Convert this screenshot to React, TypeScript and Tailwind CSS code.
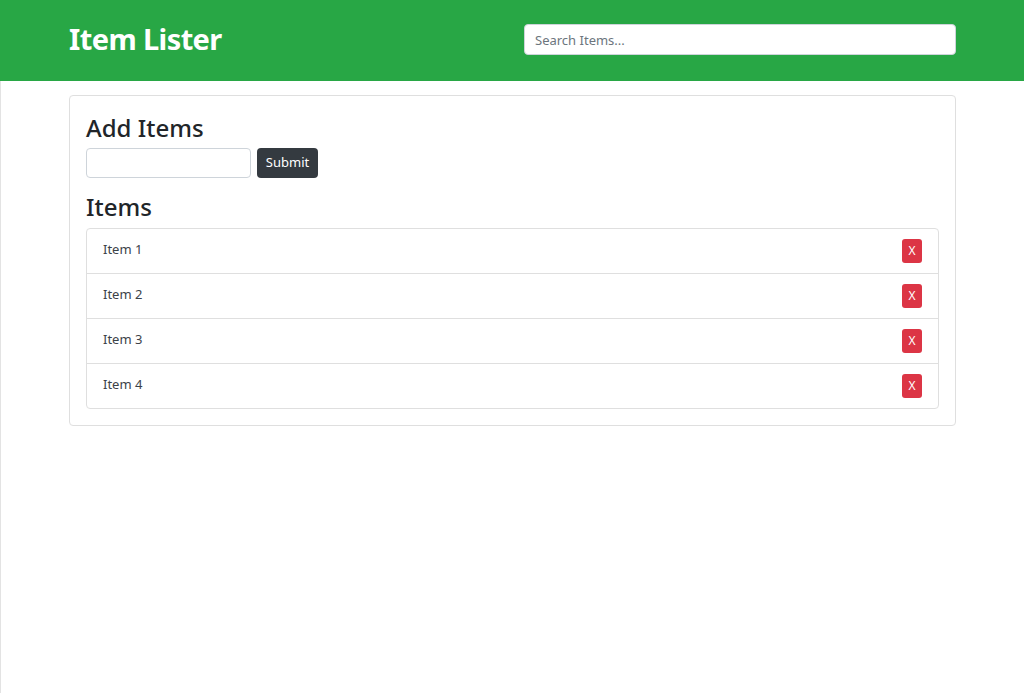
import { useState } from 'react';

const initialItems = ['Item 1', 'Item 2', 'Item 3', 'Item 4'];

export default function App() {
  const [items, setItems] = useState(initialItems);
  const [newItem, setNewItem] = useState('');
  const [filter, setFilter] = useState('');

  function handleSubmit(e: React.FormEvent) {
    e.preventDefault();
    if (!newItem.trim()) return;
    setItems([...items, newItem.trim()]);
    setNewItem('');
  }

  const visible = items.filter((i) => i.toLowerCase().includes(filter.toLowerCase()));

  return (
    <div className="min-h-[693px] bg-white font-['Segoe_UI','Noto_Sans',sans-serif] text-[#212529]">
      {/* Header */}
      <header className="h-[81px] bg-[#28a745] flex items-center justify-between pl-[69px] pr-[68px]">
        <h1 className="text-[29px] font-bold text-white leading-none tracking-[-0.6px] -mt-[4px]">Item Lister</h1>
        <input
          type="text"
          value={filter}
          onChange={(e) => setFilter(e.target.value)}
          placeholder="Search Items..."
          className="w-[432px] h-[31px] -mt-[2px] rounded-[4px] border border-[#ced4da] bg-white px-[10px] text-[13px] text-[#495057] placeholder:text-[#6c757d] outline-none"
        />
      </header>

      {/* Main */}
      <div className="border-l border-[#e3e3e3] min-h-[612px] pt-[14px] pl-[68px] pr-[68px]">
        <div className="rounded-[4px] border border-[#dfdfdf] px-[16px] pt-[17px] pb-[16px]">
          <h2 className="text-[24px] leading-[30px] font-medium mb-[5px]">Add Items</h2>
          <form onSubmit={handleSubmit} className="flex gap-[6px]">
            <input
              type="text"
              value={newItem}
              onChange={(e) => setNewItem(e.target.value)}
              className="w-[165px] h-[30px] rounded-[4px] border border-[#ced4da] px-[8px] text-[13px] outline-none"
            />
            <button
              type="submit"
              className="h-[30px] w-[61px] rounded-[4px] bg-[#343a40] text-white text-[13px]"
            >
              Submit
            </button>
          </form>

          <h2 className="text-[24px] leading-[30px] font-medium mt-[14px] mb-[6px]">Items</h2>
          <ul className="rounded-[4px] border border-[#dfdfdf]">
            {visible.map((item, idx) => (
              <li
                key={item + idx}
                className="h-[45px] flex items-center justify-between pl-[16px] pr-[16px] border-b border-[#dfdfdf] last:border-b-0 last:h-[44px]"
              >
                <span className="text-[13px] text-[#3c4248] -mt-[3px]">{item}</span>
                <button
                  onClick={() => setItems(items.filter((_, i) => i !== idx))}
                  className="w-[20px] h-[24px] rounded-[3px] bg-[#dc3545] text-white text-[12px] leading-none flex items-center justify-center"
                >
                  X
                </button>
              </li>
            ))}
          </ul>
        </div>
      </div>
    </div>
  );
}
